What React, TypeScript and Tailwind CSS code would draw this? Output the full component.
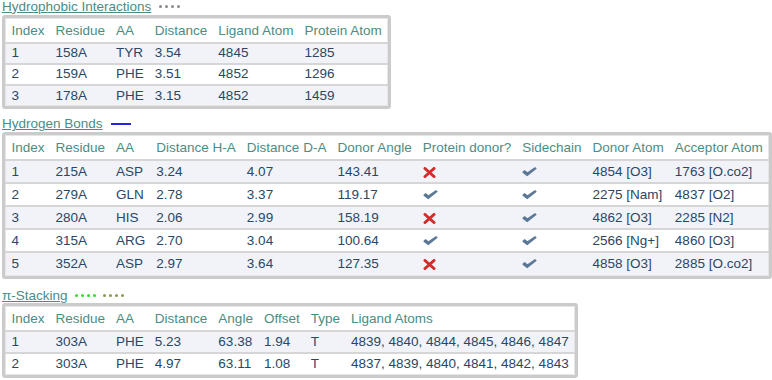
import React from 'react'

const Check = () => (
  <svg width="15" height="10" viewBox="0 0 15 10" className="inline-block">
    <path d="M1 5.2 L5.2 8.6 L14 1.6 L13 0.8 L5.4 6 L2.6 3.8 Z" fill="#5b7796" stroke="#5b7796" strokeWidth="1.2" strokeLinejoin="round" />
  </svg>
)

const Cross = () => (
  <svg width="13" height="11" viewBox="0 0 13 11" className="inline-block">
    <path d="M2 1.5 L11 9.5 M11 1.5 L2 9.5" stroke="#d42a2a" strokeWidth="3" strokeLinecap="round" />
  </svg>
)

const Dots = ({ color }: { color: string }) => (
  <span className="inline-flex gap-[3px] items-center">
    {[0, 1, 2, 3].map((i) => (
      <span key={i} className="w-[3px] h-[3px] rounded-full" style={{ backgroundColor: color }} />
    ))}
  </span>
)

type Cell = React.ReactNode

function DataTable({ headers, rows, rowH, headH }: { headers: string[]; rows: Cell[][]; rowH: string; headH: string }) {
  return (
    <div className="inline-block border-[3px] border-[#cbcbcb] rounded-[3px] ml-[2px]">
      <table className="border-collapse border border-[#e6e6e6] bg-white">
        <thead>
          <tr className={`${headH} border-b-2 border-[#d6d6d6]`}>
            {headers.map((h) => (
              <th key={h} className="text-left font-normal text-[#4a8d85] px-[5.5px] whitespace-nowrap">{h}</th>
            ))}
          </tr>
        </thead>
        <tbody>
          {rows.map((r, i) => (
            <tr key={i} className={`${rowH} ${i % 2 === 0 ? 'bg-[#f1f3f8]' : 'bg-white'} ${i < rows.length - 1 ? 'border-b-2 border-[#d6d6d6]' : ''}`}>
              {r.map((c, j) => (
                <td key={j} className="px-[5.5px] whitespace-nowrap text-[#2a4766]">{c}</td>
              ))}
            </tr>
          ))}
        </tbody>
      </table>
    </div>
  )
}

const hydrophobic = [
  ['1', '158A', 'TYR', '3.54', '4845', '1285'],
  ['2', '159A', 'PHE', '3.51', '4852', '1296'],
  ['3', '178A', 'PHE', '3.15', '4852', '1459'],
]

const hbonds: Cell[][] = [
  ['1', '215A', 'ASP', '3.24', '4.07', '143.41', <Cross />, <Check />, '4854 [O3]', '1763 [O.co2]'],
  ['2', '279A', 'GLN', '2.78', '3.37', '119.17', <Check />, <Check />, '2275 [Nam]', '4837 [O2]'],
  ['3', '280A', 'HIS', '2.06', '2.99', '158.19', <Cross />, <Check />, '4862 [O3]', '2285 [N2]'],
  ['4', '315A', 'ARG', '2.70', '3.04', '100.64', <Check />, <Check />, '2566 [Ng+]', '4860 [O3]'],
  ['5', '352A', 'ASP', '2.97', '3.64', '127.35', <Cross />, <Check />, '4858 [O3]', '2885 [O.co2]'],
]

const stacking = [
  ['1', '303A', 'PHE', '5.23', '63.38', '1.94', 'T', '4839, 4840, 4844, 4845, 4846, 4847'],
  ['2', '303A', 'PHE', '4.97', '63.11', '1.08', 'T', '4837, 4839, 4840, 4841, 4842, 4843'],
]

export default function App() {
  return (
    <div className="w-[772px] h-[380px] bg-white overflow-hidden text-[13.5px] leading-none" style={{ fontFamily: '"Liberation Sans", Arial, sans-serif' }}>
      <div className="flex items-center gap-[8px] pl-[2px] h-[13px]">
        <span className="text-[#4a8d85] underline">Hydrophobic Interactions</span>
        <Dots color="#8a8a8a" />
      </div>
      <div className="mt-[2px]">
        <DataTable headers={['Index', 'Residue', 'AA', 'Distance', 'Ligand Atom', 'Protein Atom']} rows={hydrophobic} rowH="h-[21px]" headH="h-[24px]" />
      </div>

      <div className="flex items-center gap-[8px] pl-[2px] h-[13px] mt-[6px]">
        <span className="text-[#4a8d85] underline">Hydrogen Bonds</span>
        <span className="w-[20px] h-[2px] bg-[#2525e0]" />
      </div>
      <div className="mt-[1px]">
        <DataTable headers={['Index', 'Residue', 'AA', 'Distance H-A', 'Distance D-A', 'Donor Angle', 'Protein donor?', 'Sidechain', 'Donor Atom', 'Acceptor Atom']} rows={hbonds} rowH="h-[23px]" headH="h-[25px]" />
      </div>

      <div className="flex items-center gap-[7px] pl-[2px] h-[13px] mt-[8px]">
        <span className="text-[#4a8d85] underline">π-Stacking</span>
        <Dots color="#33dd22" />
        <Dots color="#8a9a4a" />
      </div>
      <div className="mt-[1px]">
        <DataTable headers={['Index', 'Residue', 'AA', 'Distance', 'Angle', 'Offset', 'Type', 'Ligand Atoms']} rows={stacking} rowH="h-[22px]" headH="h-[24px]" />
      </div>
    </div>
  )
}
